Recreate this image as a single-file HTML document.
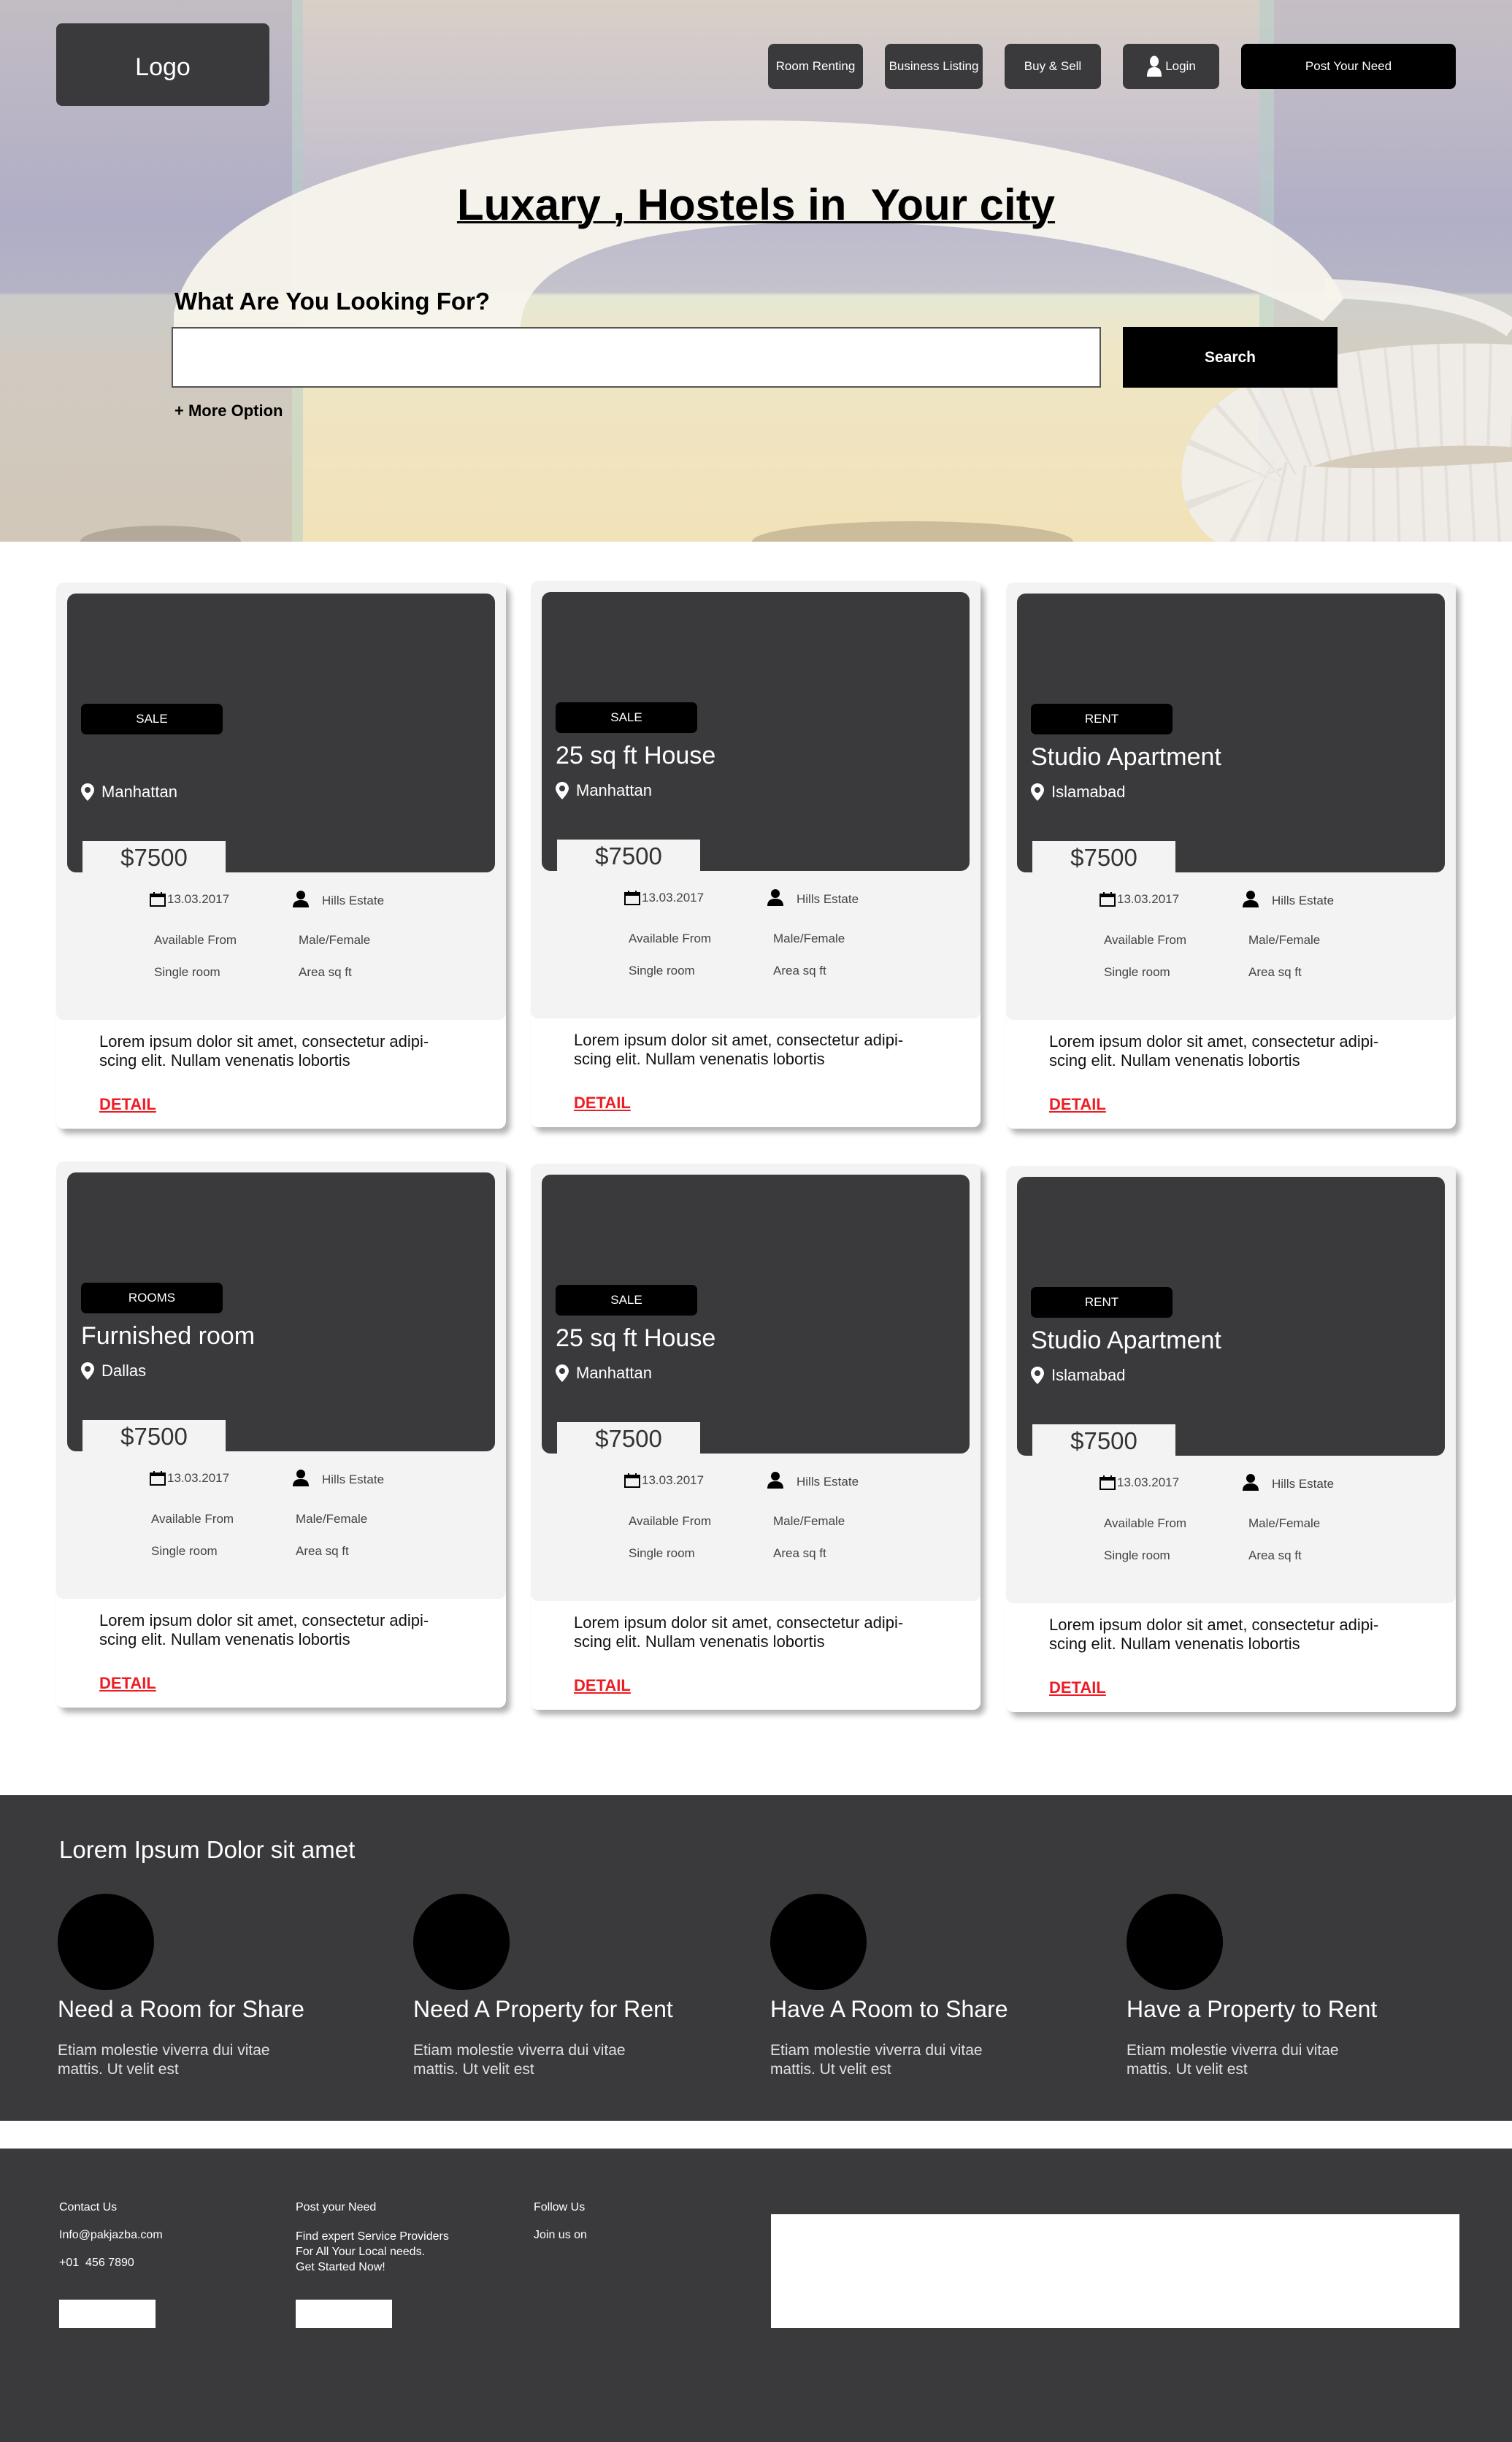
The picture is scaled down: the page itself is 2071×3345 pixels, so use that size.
<!DOCTYPE html>
<html><head><meta charset="utf-8">
<style>
*{box-sizing:border-box;margin:0;padding:0}
body{width:2071px;height:3345px;background:#fff;font-family:"Liberation Sans",sans-serif;position:relative;overflow:hidden}
.abs{position:absolute}
.hero{left:0;top:0;width:2071px;height:742px;overflow:hidden;
background:
linear-gradient(90deg,rgba(150,150,185,.35) 0 400px,rgba(175,205,200,.5) 400px 415px,rgba(0,0,0,0) 415px 1725px,rgba(175,205,200,.5) 1725px 1745px,rgba(150,150,185,.3) 1745px),
linear-gradient(180deg,#d9d0c8 0,#ccc5cc 160px,#bdbacd 300px,#c4c3cc 400px,#e6e8d4 405px,#efe6c6 480px,#f2e2b8 742px);}
.logo{left:77px;top:32px;width:292px;height:113px;background:#3a3a3c;border-radius:8px;color:#fff;font-size:34px;display:flex;align-items:center;justify-content:center;padding-top:8px}
.nav{top:60px;height:62px;background:#3a3a3c;border-radius:8px;color:#fff;font-size:17px;display:flex;align-items:center;justify-content:center}
.title{left:0;width:2071px;top:246px;text-align:center;font-size:60px;font-weight:bold;color:#000;text-decoration:underline;text-decoration-thickness:3px}
.q{left:239px;top:394px;font-size:33px;font-weight:bold;color:#000}
.input{left:235px;top:448px;width:1273px;height:83px;background:#fff;border:2px solid #555}
.search{left:1538px;top:448px;width:294px;height:83px;background:#000;color:#fff;font-size:21px;font-weight:bold;display:flex;align-items:center;justify-content:center}
.more{left:239px;top:550px;font-size:22px;font-weight:bold;color:#000}
.card{width:616px;height:748px;background:#fff;border-radius:10px;box-shadow:6px 7px 8px rgba(0,0,0,.3);overflow:hidden}
.card .gray{position:absolute;left:0;top:0;width:616px;height:599px;background:#f3f3f3;border-radius:10px}
.card .img{position:absolute;left:15px;top:15px;width:586px;height:382px;background:#3a3a3c;border-radius:12px}
.badge{position:absolute;left:34px;top:166px;width:194px;height:42px;background:#000;border-radius:7px;color:#fff;font-size:17px;display:flex;align-items:center;justify-content:center}
.ct{position:absolute;left:34px;top:220px;font-size:34px;color:#fff}
.loc{position:absolute;left:34px;top:274px;font-size:22px;color:#fff;display:flex;align-items:center;gap:10px}
.price{position:absolute;left:36px;top:354px;width:196px;height:43px;background:#f3f3f3;font-size:33px;color:#333;text-align:center;line-height:46px}
.sm{position:absolute;font-size:17px;color:#444}
.lorem{position:absolute;left:59px;top:616px;font-size:22px;line-height:26px;color:#111;width:540px}
.detail{position:absolute;left:59px;top:702px;font-size:22px;font-weight:bold;color:#ee1c24;text-decoration:underline}
.sec{left:0;top:2459px;width:2071px;height:446px;background:#3a3a3c;color:#fff}
.foot{left:0;top:2943px;width:2071px;height:402px;background:#3a3a3c;color:#fff}
.circ{width:132px;height:132px;border-radius:50%;background:#000}
</style></head><body>
<div class="abs hero"></div>
<svg class="abs" style="left:0;top:0" width="2071" height="742" viewBox="0 0 2071 742">
 <ellipse cx="220" cy="742" rx="110" ry="22" fill="#5a4a40" opacity=".25"/>
 <ellipse cx="1250" cy="742" rx="220" ry="28" fill="#5a4a40" opacity=".25"/>
 <path d="M1815,395 C1950,400 2030,420 2071,450" fill="none" stroke="#f4f1ec" stroke-width="26" opacity=".9"/>
 <path d="M2110,545 C1950,530 1720,550 1690,640 C1670,720 1820,720 2110,700" fill="none" stroke="#f1eeea" stroke-width="140" opacity=".92"/>
 <path d="M2110,545 C1950,530 1720,550 1690,640 C1670,720 1820,720 2110,700" fill="none" stroke="#ddd7d0" stroke-width="140" stroke-dasharray="4 30" opacity=".6"/>
 <path d="M238,460 L238,430 C280,230 700,165 1040,165 C1420,165 1780,260 1840,410 L1812,440 C1600,330 1320,300 1100,305 C800,310 713,380 713,450 L713,460 Z" fill="#f8f4ec" opacity=".95"/>
</svg>
<div class="abs logo">Logo</div>
<div class="abs nav" style="left:1052px;width:130px">Room Renting</div>
<div class="abs nav" style="left:1212px;width:134px">Business Listing</div>
<div class="abs nav" style="left:1376px;width:132px">Buy &amp; Sell</div>
<div class="abs nav" style="left:1538px;width:132px"><svg width="22" height="30" viewBox="0 0 22 30" style="margin-right:4px"><ellipse cx="11" cy="8" rx="6" ry="7.5" fill="#fff"/><path d="M1 29 C1 19 5 16 11 16 C17 16 21 19 21 29 Z" fill="#fff"/></svg>Login</div>
<div class="abs nav" style="left:1700px;width:294px;background:#000">Post Your Need</div>
<div class="abs title">Luxary , Hostels in &nbsp;Your city</div>
<div class="abs q">What Are You Looking For?</div>
<div class="abs input"></div>
<div class="abs search">Search</div>
<div class="abs more">+ More Option</div>

<div class="abs card" style="left:77px;top:798px"><div class="gray"></div><div class="img"></div><div class="badge">SALE</div><div class="loc"><svg width="18" height="24" viewBox="0 0 18 24"><path d="M9 0C4 0 0 4 0 9c0 6 9 15 9 15s9-9 9-15C18 4 14 0 9 0z M9 5a4 4 0 1 1 0 8a4 4 0 1 1 0-8z" fill="#fff" fill-rule="evenodd"/></svg>Manhattan</div><div class="price">$7500</div>
<svg class="abs" style="left:128px;top:424px" width="22" height="20" viewBox="0 0 22 20"><rect x="1" y="3" width="20" height="16" fill="none" stroke="#000" stroke-width="2"/><rect x="1" y="3" width="20" height="4" fill="#000"/><rect x="5" y="0" width="2" height="5" fill="#000"/><rect x="15" y="0" width="2" height="5" fill="#000"/></svg><div class="sm" style="left:152px;top:424px">13.03.2017</div>
<svg class="abs" style="left:324px;top:422px" width="22" height="24" viewBox="0 0 22 24"><ellipse cx="11" cy="6" rx="6" ry="6" fill="#000"/><path d="M0 23C0 16 4 13 11 13S22 16 22 23Z" fill="#000"/></svg><div class="sm" style="left:364px;top:426px">Hills Estate</div>
<div class="sm" style="left:134px;top:480px">Available From</div><div class="sm" style="left:332px;top:480px">Male/Female</div>
<div class="sm" style="left:134px;top:524px">Single room</div><div class="sm" style="left:332px;top:524px">Area sq ft</div>
<div class="lorem">Lorem ipsum dolor sit amet, consectetur adipi-<br>scing elit. Nullam venenatis lobortis</div><div class="detail">DETAIL</div></div>

<div class="abs card" style="left:727px;top:796px"><div class="gray"></div><div class="img"></div><div class="badge">SALE</div><div class="ct">25 sq ft House</div><div class="loc"><svg width="18" height="24" viewBox="0 0 18 24"><path d="M9 0C4 0 0 4 0 9c0 6 9 15 9 15s9-9 9-15C18 4 14 0 9 0z M9 5a4 4 0 1 1 0 8a4 4 0 1 1 0-8z" fill="#fff" fill-rule="evenodd"/></svg>Manhattan</div><div class="price">$7500</div>
<svg class="abs" style="left:128px;top:424px" width="22" height="20" viewBox="0 0 22 20"><rect x="1" y="3" width="20" height="16" fill="none" stroke="#000" stroke-width="2"/><rect x="1" y="3" width="20" height="4" fill="#000"/><rect x="5" y="0" width="2" height="5" fill="#000"/><rect x="15" y="0" width="2" height="5" fill="#000"/></svg><div class="sm" style="left:152px;top:424px">13.03.2017</div>
<svg class="abs" style="left:324px;top:422px" width="22" height="24" viewBox="0 0 22 24"><ellipse cx="11" cy="6" rx="6" ry="6" fill="#000"/><path d="M0 23C0 16 4 13 11 13S22 16 22 23Z" fill="#000"/></svg><div class="sm" style="left:364px;top:426px">Hills Estate</div>
<div class="sm" style="left:134px;top:480px">Available From</div><div class="sm" style="left:332px;top:480px">Male/Female</div>
<div class="sm" style="left:134px;top:524px">Single room</div><div class="sm" style="left:332px;top:524px">Area sq ft</div>
<div class="lorem">Lorem ipsum dolor sit amet, consectetur adipi-<br>scing elit. Nullam venenatis lobortis</div><div class="detail">DETAIL</div></div>

<div class="abs card" style="left:1378px;top:798px"><div class="gray"></div><div class="img"></div><div class="badge">RENT</div><div class="ct">Studio Apartment</div><div class="loc"><svg width="18" height="24" viewBox="0 0 18 24"><path d="M9 0C4 0 0 4 0 9c0 6 9 15 9 15s9-9 9-15C18 4 14 0 9 0z M9 5a4 4 0 1 1 0 8a4 4 0 1 1 0-8z" fill="#fff" fill-rule="evenodd"/></svg>Islamabad</div><div class="price">$7500</div>
<svg class="abs" style="left:128px;top:424px" width="22" height="20" viewBox="0 0 22 20"><rect x="1" y="3" width="20" height="16" fill="none" stroke="#000" stroke-width="2"/><rect x="1" y="3" width="20" height="4" fill="#000"/><rect x="5" y="0" width="2" height="5" fill="#000"/><rect x="15" y="0" width="2" height="5" fill="#000"/></svg><div class="sm" style="left:152px;top:424px">13.03.2017</div>
<svg class="abs" style="left:324px;top:422px" width="22" height="24" viewBox="0 0 22 24"><ellipse cx="11" cy="6" rx="6" ry="6" fill="#000"/><path d="M0 23C0 16 4 13 11 13S22 16 22 23Z" fill="#000"/></svg><div class="sm" style="left:364px;top:426px">Hills Estate</div>
<div class="sm" style="left:134px;top:480px">Available From</div><div class="sm" style="left:332px;top:480px">Male/Female</div>
<div class="sm" style="left:134px;top:524px">Single room</div><div class="sm" style="left:332px;top:524px">Area sq ft</div>
<div class="lorem">Lorem ipsum dolor sit amet, consectetur adipi-<br>scing elit. Nullam venenatis lobortis</div><div class="detail">DETAIL</div></div>

<div class="abs card" style="left:77px;top:1591px"><div class="gray"></div><div class="img"></div><div class="badge">ROOMS</div><div class="ct">Furnished room</div><div class="loc"><svg width="18" height="24" viewBox="0 0 18 24"><path d="M9 0C4 0 0 4 0 9c0 6 9 15 9 15s9-9 9-15C18 4 14 0 9 0z M9 5a4 4 0 1 1 0 8a4 4 0 1 1 0-8z" fill="#fff" fill-rule="evenodd"/></svg>Dallas</div><div class="price">$7500</div>
<svg class="abs" style="left:128px;top:424px" width="22" height="20" viewBox="0 0 22 20"><rect x="1" y="3" width="20" height="16" fill="none" stroke="#000" stroke-width="2"/><rect x="1" y="3" width="20" height="4" fill="#000"/><rect x="5" y="0" width="2" height="5" fill="#000"/><rect x="15" y="0" width="2" height="5" fill="#000"/></svg><div class="sm" style="left:152px;top:424px">13.03.2017</div>
<svg class="abs" style="left:324px;top:422px" width="22" height="24" viewBox="0 0 22 24"><ellipse cx="11" cy="6" rx="6" ry="6" fill="#000"/><path d="M0 23C0 16 4 13 11 13S22 16 22 23Z" fill="#000"/></svg><div class="sm" style="left:364px;top:426px">Hills Estate</div>
<div class="sm" style="left:130px;top:480px">Available From</div><div class="sm" style="left:328px;top:480px">Male/Female</div>
<div class="sm" style="left:130px;top:524px">Single room</div><div class="sm" style="left:328px;top:524px">Area sq ft</div>
<div class="lorem">Lorem ipsum dolor sit amet, consectetur adipi-<br>scing elit. Nullam venenatis lobortis</div><div class="detail">DETAIL</div></div>

<div class="abs card" style="left:727px;top:1594px"><div class="gray"></div><div class="img"></div><div class="badge">SALE</div><div class="ct">25 sq ft House</div><div class="loc"><svg width="18" height="24" viewBox="0 0 18 24"><path d="M9 0C4 0 0 4 0 9c0 6 9 15 9 15s9-9 9-15C18 4 14 0 9 0z M9 5a4 4 0 1 1 0 8a4 4 0 1 1 0-8z" fill="#fff" fill-rule="evenodd"/></svg>Manhattan</div><div class="price">$7500</div>
<svg class="abs" style="left:128px;top:424px" width="22" height="20" viewBox="0 0 22 20"><rect x="1" y="3" width="20" height="16" fill="none" stroke="#000" stroke-width="2"/><rect x="1" y="3" width="20" height="4" fill="#000"/><rect x="5" y="0" width="2" height="5" fill="#000"/><rect x="15" y="0" width="2" height="5" fill="#000"/></svg><div class="sm" style="left:152px;top:424px">13.03.2017</div>
<svg class="abs" style="left:324px;top:422px" width="22" height="24" viewBox="0 0 22 24"><ellipse cx="11" cy="6" rx="6" ry="6" fill="#000"/><path d="M0 23C0 16 4 13 11 13S22 16 22 23Z" fill="#000"/></svg><div class="sm" style="left:364px;top:426px">Hills Estate</div>
<div class="sm" style="left:134px;top:480px">Available From</div><div class="sm" style="left:332px;top:480px">Male/Female</div>
<div class="sm" style="left:134px;top:524px">Single room</div><div class="sm" style="left:332px;top:524px">Area sq ft</div>
<div class="lorem">Lorem ipsum dolor sit amet, consectetur adipi-<br>scing elit. Nullam venenatis lobortis</div><div class="detail">DETAIL</div></div>

<div class="abs card" style="left:1378px;top:1597px"><div class="gray"></div><div class="img"></div><div class="badge">RENT</div><div class="ct">Studio Apartment</div><div class="loc"><svg width="18" height="24" viewBox="0 0 18 24"><path d="M9 0C4 0 0 4 0 9c0 6 9 15 9 15s9-9 9-15C18 4 14 0 9 0z M9 5a4 4 0 1 1 0 8a4 4 0 1 1 0-8z" fill="#fff" fill-rule="evenodd"/></svg>Islamabad</div><div class="price">$7500</div>
<svg class="abs" style="left:128px;top:424px" width="22" height="20" viewBox="0 0 22 20"><rect x="1" y="3" width="20" height="16" fill="none" stroke="#000" stroke-width="2"/><rect x="1" y="3" width="20" height="4" fill="#000"/><rect x="5" y="0" width="2" height="5" fill="#000"/><rect x="15" y="0" width="2" height="5" fill="#000"/></svg><div class="sm" style="left:152px;top:424px">13.03.2017</div>
<svg class="abs" style="left:324px;top:422px" width="22" height="24" viewBox="0 0 22 24"><ellipse cx="11" cy="6" rx="6" ry="6" fill="#000"/><path d="M0 23C0 16 4 13 11 13S22 16 22 23Z" fill="#000"/></svg><div class="sm" style="left:364px;top:426px">Hills Estate</div>
<div class="sm" style="left:134px;top:480px">Available From</div><div class="sm" style="left:332px;top:480px">Male/Female</div>
<div class="sm" style="left:134px;top:524px">Single room</div><div class="sm" style="left:332px;top:524px">Area sq ft</div>
<div class="lorem">Lorem ipsum dolor sit amet, consectetur adipi-<br>scing elit. Nullam venenatis lobortis</div><div class="detail">DETAIL</div></div>

<div class="abs sec">
 <div class="abs" style="left:81px;top:56px;font-size:33px">Lorem Ipsum Dolor sit amet</div>
 <div class="abs circ" style="left:79px;top:135px"></div>
 <div class="abs circ" style="left:566px;top:135px"></div>
 <div class="abs circ" style="left:1055px;top:135px"></div>
 <div class="abs circ" style="left:1543px;top:135px"></div>
 <div class="abs" style="left:79px;top:275px;font-size:32px">Need a Room for Share</div>
 <div class="abs" style="left:566px;top:275px;font-size:32px">Need A Property for Rent</div>
 <div class="abs" style="left:1055px;top:275px;font-size:32px">Have A Room to Share</div>
 <div class="abs" style="left:1543px;top:275px;font-size:32px">Have a Property to Rent</div>
 <div class="abs" style="left:79px;top:337px;font-size:21px;line-height:26px;color:#e0e0e0">Etiam molestie viverra dui vitae<br>mattis. Ut velit est</div>
 <div class="abs" style="left:566px;top:337px;font-size:21px;line-height:26px;color:#e0e0e0">Etiam molestie viverra dui vitae<br>mattis. Ut velit est</div>
 <div class="abs" style="left:1055px;top:337px;font-size:21px;line-height:26px;color:#e0e0e0">Etiam molestie viverra dui vitae<br>mattis. Ut velit est</div>
 <div class="abs" style="left:1543px;top:337px;font-size:21px;line-height:26px;color:#e0e0e0">Etiam molestie viverra dui vitae<br>mattis. Ut velit est</div>
</div>

<div class="abs foot">
 <div class="abs" style="left:81px;top:72px;font-size:16px">Contact Us</div>
 <div class="abs" style="left:81px;top:110px;font-size:16px">Info@pakjazba.com</div>
 <div class="abs" style="left:81px;top:148px;font-size:16px">+01 &nbsp;456 7890</div>
 <div class="abs" style="left:405px;top:72px;font-size:16px">Post your Need</div>
 <div class="abs" style="left:405px;top:110px;font-size:16px;line-height:21px">Find expert Service Providers<br>For All Your Local needs.<br>Get Started Now!</div>
 <div class="abs" style="left:731px;top:72px;font-size:16px">Follow Us</div>
 <div class="abs" style="left:731px;top:110px;font-size:16px">Join us on</div>
 <div class="abs" style="left:81px;top:207px;width:132px;height:39px;background:#fff"></div>
 <div class="abs" style="left:405px;top:207px;width:132px;height:39px;background:#fff"></div>
 <div class="abs" style="left:1056px;top:90px;width:943px;height:156px;background:#fff"></div>
</div>
</body></html>
